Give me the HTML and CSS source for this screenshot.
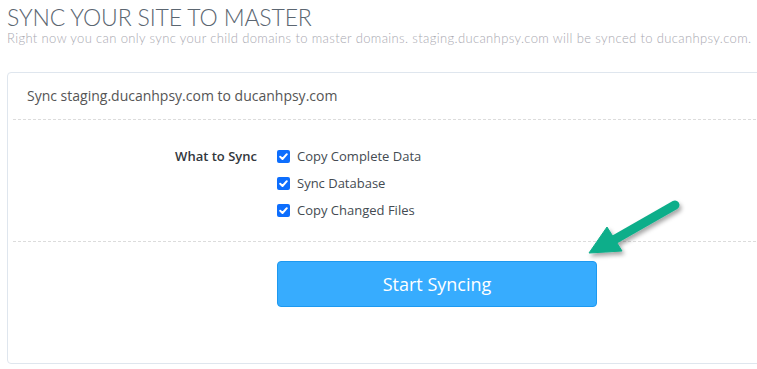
FILE: index.html
```html
<!DOCTYPE html>
<html>
<head>
<meta charset="utf-8">
<link rel="stylesheet" href="styles.css">
</head>
<body>
<div class="page">
  <h1 class="title">SYNC YOUR SITE TO MASTER</h1>
  <p class="subtitle">Right now you can only sync your child domains to master domains. staging.ducanhpsy.com will be synced to ducanhpsy.com.</p>
  <div class="card">
    <div class="card-head">Sync staging.ducanhpsy.com to ducanhpsy.com</div>
    <div class="options">
      <div class="opt-label">What to Sync</div>
      <div class="opt-list">
        <label class="check"><span class="box"><svg viewBox="0 0 13 13" width="13" height="13"><path d="M3.2 6.8 L5.5 9 L9.8 4.2" fill="none" stroke="#fff" stroke-width="2" stroke-linecap="round" stroke-linejoin="round"/></svg></span>Copy Complete Data</label>
        <label class="check"><span class="box"><svg viewBox="0 0 13 13" width="13" height="13"><path d="M3.2 6.8 L5.5 9 L9.8 4.2" fill="none" stroke="#fff" stroke-width="2" stroke-linecap="round" stroke-linejoin="round"/></svg></span>Sync Database</label>
        <label class="check"><span class="box"><svg viewBox="0 0 13 13" width="13" height="13"><path d="M3.2 6.8 L5.5 9 L9.8 4.2" fill="none" stroke="#fff" stroke-width="2" stroke-linecap="round" stroke-linejoin="round"/></svg></span>Copy Changed Files</label>
      </div>
    </div>
    <div class="actions">
      <button class="btn">Start Syncing</button>
    </div>
  </div>
</div>
<svg class="arrow" width="757" height="369" viewBox="0 0 757 369">
  <defs>
    <filter id="sh" x="-20%" y="-20%" width="140%" height="140%">
      <feDropShadow dx="2" dy="3" stdDeviation="2" flood-color="#000" flood-opacity="0.35"/>
    </filter>
  </defs>
  <g filter="url(#sh)" fill="#0fae8a" stroke="#0fae8a">
    <line x1="675" y1="205" x2="612" y2="241" stroke-width="9" stroke-linecap="round"/>
    <polygon points="589,253 607,227 622,251" stroke-width="1" stroke-linejoin="round"/>
  </g>
</svg>
</body>
</html>
```
FILE: styles.css
```css
html, body {
  margin: 0;
  padding: 0;
  background: #fff;
  overflow: hidden;
}
.page {
  padding: 4px 0 0 7px;
  width: 900px;
}
.title {
  margin: 0;
  font-family: Lato, "Open Sans", sans-serif;
  font-weight: 300;
  font-size: 23px;
  line-height: 26px;
  color: #5b6671;
  letter-spacing: -0.15px;
}
.subtitle {
  margin: 0;
  font-family: Lato, "Open Sans", sans-serif;
  font-weight: 300;
  font-size: 13px;
  line-height: 16px;
  color: #a9a9b1;
  letter-spacing: 0.37px;
}
.card {
  margin-top: 26px;
  width: 880px;
  height: 292px;
  border: 1px solid #dfe6ee;
  border-radius: 4px;
  box-sizing: border-box;
  padding: 0 0 0 5px;
}
.card-head {
  font-family: "Open Sans", sans-serif;
  font-size: 14px;
  color: #555;
  line-height: 20px;
  padding: 13px 0 13px 14px;
  border-bottom: 1px dashed #dcdcdc;
}
.options {
  display: flex;
  padding: 26px 0 21px;
  border-bottom: 1px dashed #dcdcdc;
  font-family: "Open Sans", sans-serif;
  font-size: 13px;
}
.opt-label {
  width: 244px;
  text-align: right;
  font-weight: 600;
  color: #32373c;
  line-height: 20px;
  padding-top: 0;
}
.opt-list {
  margin-left: 20px;
  display: flex;
  flex-direction: column;
  gap: 7px;
}
.check {
  display: flex;
  align-items: center;
  color: #444b52;
  line-height: 20px;
}
.box {
  width: 13px;
  height: 13px;
  border-radius: 2px;
  background: #0d6efd;
  margin-right: 7px;
  display: inline-flex;
}
.actions {
  padding: 19px 0 0 264px;
}
.btn {
  width: 320px;
  height: 46px;
  background: #37acfe;
  border: 1px solid #1d99f0;
  border-radius: 4px;
  color: #fff;
  font-family: "Open Sans", sans-serif;
  font-size: 18px;
  padding: 0;
}
.arrow {
  position: absolute;
  left: 0;
  top: 0;
  pointer-events: none;
}
```
